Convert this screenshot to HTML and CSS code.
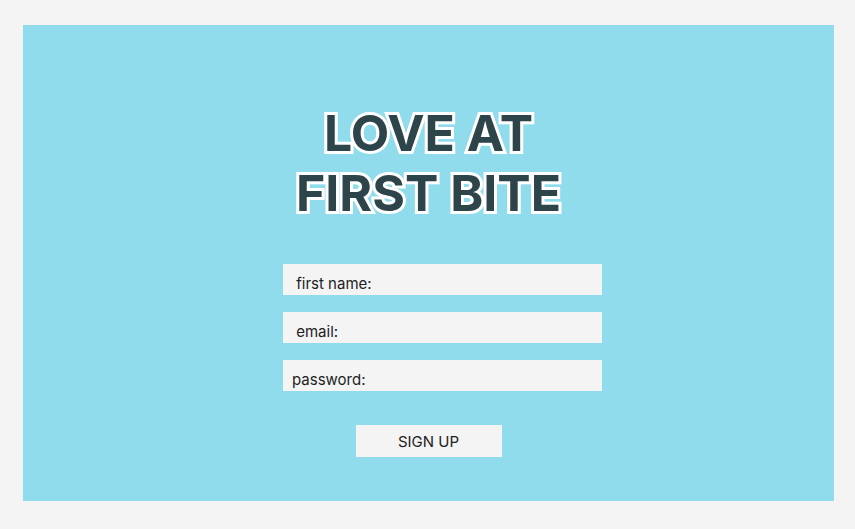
FILE: index.html
```html
<!DOCTYPE html>
<html>
<head>
<meta charset="utf-8">
<link rel="stylesheet" href="styles.css">
</head>
<body>
<main class="panel">
  <h1 class="title">LOVE AT<br>FIRST BITE</h1>
  <form class="form">
    <input class="field" type="text" placeholder="&nbsp;first name:">
    <input class="field" type="text" placeholder="&nbsp;email:">
    <input class="field" type="password" placeholder="password:">
    <button class="btn" type="button">SIGN UP</button>
  </form>
</main>
</body>
</html>
```
FILE: styles.css
```css
html, body {
  margin: 0;
  padding: 0;
  background: #f4f4f4;
  font-family: Inter, "Liberation Sans", sans-serif;
}
body {
  padding: 25px 0 0 23px;
}
.panel {
  width: 811px;
  height: 476px;
  background: #90dcec;
  box-sizing: border-box;
  padding-top: 78px;
  display: flex;
  flex-direction: column;
  align-items: center;
}
.title {
  margin: 0;
  font-family: Inter, sans-serif;
  font-weight: 700;
  font-size: 50px;
  line-height: 60px;
  text-align: center;
  color: #2e444b;
  -webkit-text-stroke: 6px #ffffff;
  paint-order: stroke fill;
}
.form {
  margin-top: 41px;
  display: flex;
  flex-direction: column;
  align-items: center;
}
.field {
  width: 319px;
  height: 31px;
  box-sizing: border-box;
  margin: 0 0 17px 28px;
  padding: 7px 0 0 9px;
  border: none;
  background: #f4f4f4;
  font-family: Inter, sans-serif;
  font-size: 15px;
  color: #222;
  outline: none;
}
.field::placeholder {
  color: #222;
  opacity: 1;
}
.btn {
  margin-top: 17px;
  width: 146px;
  height: 32px;
  border: none;
  background: #f4f4f4;
  font-family: Inter, sans-serif;
  font-size: 15px;
  color: #222;
  padding: 0;
}
```
